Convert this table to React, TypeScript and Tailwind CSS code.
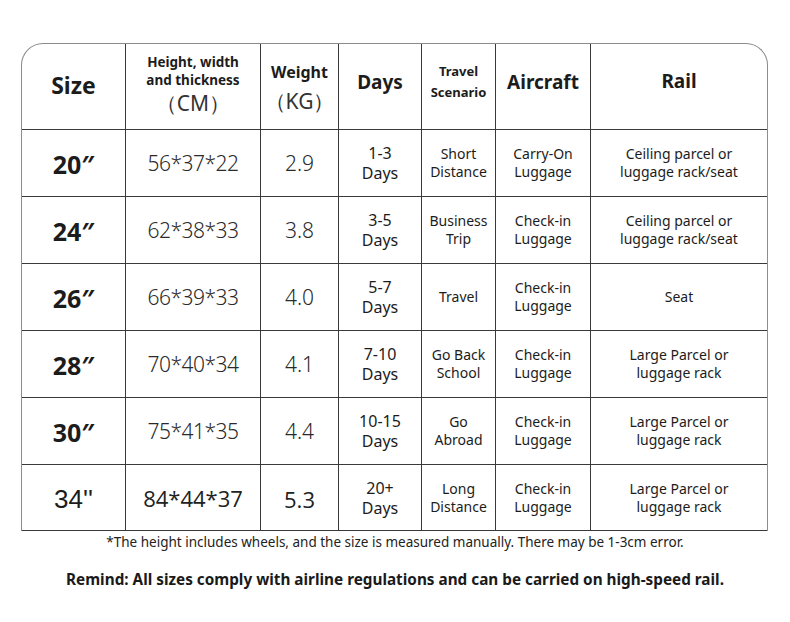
import React from "react";

type Row = {
  size: string;
  dim: string;
  weight: string;
  days: [string, string];
  scenario: [string, string?];
  aircraft: [string, string];
  rail: [string, string?];
  alt?: boolean;
};

const rows: Row[] = [
  { size: "20″", dim: "56*37*22", weight: "2.9", days: ["1-3", "Days"], scenario: ["Short", "Distance"], aircraft: ["Carry-On", "Luggage"], rail: ["Ceiling parcel or", "luggage rack/seat"] },
  { size: "24″", dim: "62*38*33", weight: "3.8", days: ["3-5", "Days"], scenario: ["Business", "Trip"], aircraft: ["Check-in", "Luggage"], rail: ["Ceiling parcel or", "luggage rack/seat"] },
  { size: "26″", dim: "66*39*33", weight: "4.0", days: ["5-7", "Days"], scenario: ["Travel"], aircraft: ["Check-in", "Luggage"], rail: ["Seat"] },
  { size: "28″", dim: "70*40*34", weight: "4.1", days: ["7-10", "Days"], scenario: ["Go Back", "School"], aircraft: ["Check-in", "Luggage"], rail: ["Large Parcel or", "luggage rack"] },
  { size: "30″", dim: "75*41*35", weight: "4.4", days: ["10-15", "Days"], scenario: ["Go", "Abroad"], aircraft: ["Check-in", "Luggage"], rail: ["Large Parcel or", "luggage rack"] },
  { size: "34''", dim: "84*44*37", weight: "5.3", days: ["20+", "Days"], scenario: ["Long", "Distance"], aircraft: ["Check-in", "Luggage"], rail: ["Large Parcel or", "luggage rack"], alt: true },
];

const cols = "grid grid-cols-[104px_135px_78px_83px_74px_95px_176px]";
const cell = "flex flex-col items-center justify-center text-center border-r border-[#3a3a3a]";
const lastCell = "flex flex-col items-center justify-center text-center";

export default function App() {
  return (
    <div
      className="w-[790px] h-[622px] bg-white text-[#1c1c1c]"
      style={{ fontFamily: '"Noto Sans", "Open Sans", sans-serif' }}
    >
      <div className="pt-[43px] pl-[21px]">
        <div className="w-[747px] border-l border-r border-t border-[#8c8c8c] rounded-t-[22px]">
          {/* header */}
          <div className={`${cols} h-[85px]`}>
            <div className={`${cell} pb-[2px]`}>
              <span className="text-[23px] font-bold leading-none">Size</span>
            </div>
            <div className={`${cell} justify-start pt-[9px]`}>
              <span className="text-[13.5px] font-bold leading-[18px]">Height, width</span>
              <span className="text-[13.5px] font-bold leading-[18px]">and thickness</span>
              <span className="text-[21px] leading-none mt-[4px] text-[#333]">（CM）</span>
            </div>
            <div className={`${cell} justify-start pt-[20px]`}>
              <span className="text-[16px] font-bold leading-none">Weight</span>
              <span className="text-[21px] leading-none mt-[11px] text-[#333]">（KG）</span>
            </div>
            <div className={`${cell} pb-[8px]`}>
              <span className="text-[19px] font-bold leading-none">Days</span>
            </div>
            <div className={`${cell} pb-[10px]`}>
              <span className="text-[13px] font-bold leading-[21px]">Travel</span>
              <span className="text-[13px] font-bold leading-[21px]">Scenario</span>
            </div>
            <div className={`${cell} pb-[8px]`}>
              <span className="text-[19px] font-bold leading-none">Aircraft</span>
            </div>
            <div className={`${lastCell} pb-[10px]`}>
              <span className="text-[19px] font-bold leading-none">Rail</span>
            </div>
          </div>
          {/* body */}
          {rows.map((r, i) => (
            <div
              key={i}
              className={`${cols} h-[67px] border-t border-[#3a3a3a] ${i === rows.length - 1 ? "border-b" : ""}`}
            >
              <div className={cell}>
                {r.alt ? (
                  <span className="text-[26px] leading-none mt-[2px]" style={{ fontFamily: '"Liberation Sans", sans-serif' }}>{r.size}</span>
                ) : (
                  <span className="text-[25px] font-bold leading-none mt-[2px]">{r.size}</span>
                )}
              </div>
              <div className={cell}>
                {r.alt ? (
                  <span className="text-[22px] leading-none text-[#222]" style={{ fontFamily: '"Open Sans", sans-serif' }}>
                    {r.dim}
                  </span>
                ) : (
                  <span className="text-[21px] leading-none text-[#2a2a2a] font-light tracking-[-0.5px]">{r.dim}</span>
                )}
              </div>
              <div className={cell}>
                {r.alt ? (
                  <span className="text-[22px] leading-none text-[#222] mt-[2px]" style={{ fontFamily: '"Open Sans", sans-serif' }}>
                    {r.weight}
                  </span>
                ) : (
                  <span className="text-[21px] leading-none text-[#2a2a2a] font-light">{r.weight}</span>
                )}
              </div>
              <div className={cell}>
                <span className="text-[16px] leading-[20px]">{r.days[0]}</span>
                <span className="text-[16px] leading-[20px]">{r.days[1]}</span>
              </div>
              <div className={cell}>
                <span className="text-[14px] leading-[18px]">{r.scenario[0]}</span>
                {r.scenario[1] && <span className="text-[14px] leading-[18px]">{r.scenario[1]}</span>}
              </div>
              <div className={cell}>
                <span className="text-[14px] leading-[18px]">{r.aircraft[0]}</span>
                <span className="text-[14px] leading-[18px]">{r.aircraft[1]}</span>
              </div>
              <div className={lastCell}>
                <span className="text-[14px] leading-[18px]">{r.rail[0]}</span>
                {r.rail[1] && <span className="text-[14px] leading-[18px]">{r.rail[1]}</span>}
              </div>
            </div>
          ))}
        </div>
      </div>
      <div className="text-center text-[13.5px] leading-none mt-[5px] text-[#222]">
        *The height includes wheels, and the size is measured manually. There may be 1-3cm error.
      </div>
      <div className="text-center text-[15.3px] font-bold leading-none mt-[22px] text-[#1a1a1a]">
        Remind: All sizes comply with airline regulations and can be carried on high-speed rail.
      </div>
    </div>
  );
}
